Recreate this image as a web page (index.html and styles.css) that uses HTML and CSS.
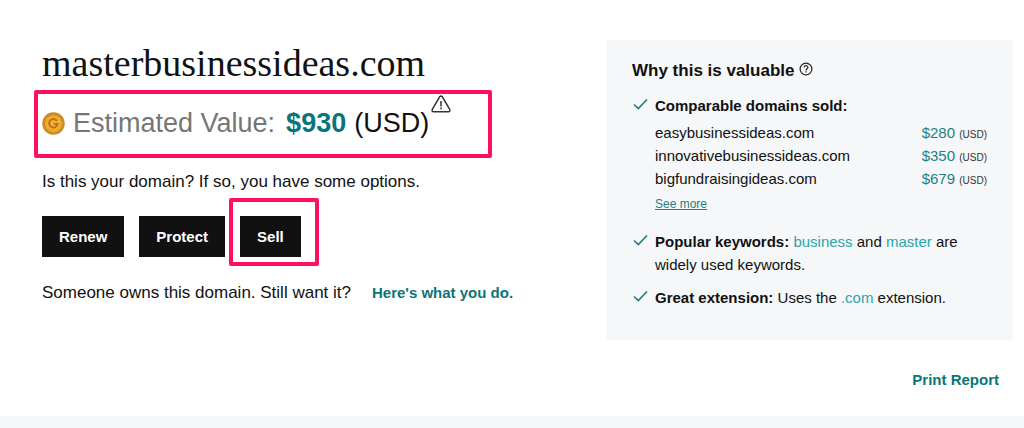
FILE: index.html
```html
<!DOCTYPE html>
<html lang="en">
<head>
<meta charset="utf-8">
<meta name="viewport" content="width=device-width, initial-scale=1">
<title>Domain appraisal</title>
<link rel="stylesheet" href="styles.css">
</head>
<body>
<main class="appraisal">
  <section class="summary">
    <h1 class="domain">masterbusinessideas.com</h1>
    <p class="estimate marked">
      <svg class="coin" viewBox="0 0 24 24" aria-hidden="true">
        <circle cx="12" cy="12" r="11.7" fill="#c8841f"/>
        <circle cx="12" cy="12" r="10.4" fill="none" stroke="#e3a32c" stroke-width="1" stroke-dasharray="1.5 1.2"/>
        <circle cx="12" cy="12" r="9" fill="#f3b12f"/>
        <circle cx="12" cy="12" r="7.3" fill="none" stroke="#e9a52a" stroke-width="1"/>
        <path d="M15.6 9.4A4.4 4.4 0 1 0 16.2 12.6H12.4" fill="none" stroke="#b8741a" stroke-width="2"/>
      </svg>
      <span class="label">Estimated Value:</span>
      <strong class="amount">$930</strong>
      <span>(USD)</span>
      <svg class="warning" viewBox="0 0 20 18" role="img" aria-label="Warning">
        <path d="M8.6 1.8 1.3 14.4Q.4 16.8 2.8 16.8H17.2Q19.6 16.8 18.7 14.4L11.4 1.8Q10 .2 8.6 1.8Z" fill="none" stroke="#333" stroke-width="1.5" stroke-linejoin="round"/>
        <path d="M10 6V11.4M10 12.6V14.2" stroke="#333" stroke-width="1.5"/>
      </svg>
    </p>
    <p class="question">Is this your domain? If so, you have some options.</p>
    <div class="actions">
      <button class="button" type="button">Renew</button>
      <button class="button" type="button">Protect</button>
      <span class="marked sell"><button class="button" type="button">Sell</button></span>
    </div>
    <p class="owned"><span>Someone owns this domain. Still want it?</span> <a class="link" href="#help">Here's what you do.</a></p>
  </section>

  <aside class="side">
    <section class="card">
      <h2 class="card-title">Why this is valuable
        <svg class="help" viewBox="0 0 14 14" role="img" aria-label="Help">
          <circle cx="7" cy="7" r="5.9" fill="none" stroke="#222" stroke-width="1.2"/>
          <path d="M5.1 5.6C5.1 3.1 8.9 3.1 8.9 5.4 8.9 6.8 7 6.8 7 8.4M7 9.3V10.6" fill="none" stroke="#222" stroke-width="1.2"/>
        </svg>
      </h2>
      <ul class="reasons">
        <li class="reason">
          <svg class="check" viewBox="0 0 15 12" aria-hidden="true"><path d="M1 6.5 5.3 10.5 14 1.5"/></svg>
          <div class="reason-body">
            <b>Comparable domains sold:</b>
            <table class="sales">
              <tr><td>easybusinessideas.com</td><td class="price">$280 <small>(USD)</small></td></tr>
              <tr><td>innovativebusinessideas.com</td><td class="price">$350 <small>(USD)</small></td></tr>
              <tr><td>bigfundraisingideas.com</td><td class="price">$679 <small>(USD)</small></td></tr>
            </table>
            <a class="more" href="#more">See more</a>
          </div>
        </li>
        <li class="reason">
          <svg class="check" viewBox="0 0 15 12" aria-hidden="true"><path d="M1 6.5 5.3 10.5 14 1.5"/></svg>
          <div class="reason-body"><b>Popular keywords:</b> <span class="key">business</span> and <span class="key">master</span> are <br>widely used keywords.</div>
        </li>
        <li class="reason">
          <svg class="check" viewBox="0 0 15 12" aria-hidden="true"><path d="M1 6.5 5.3 10.5 14 1.5"/></svg>
          <div class="reason-body"><b>Great extension:</b> Uses the <span class="key">.com</span> extension.</div>
        </li>
      </ul>
    </section>
    <a class="link print" href="#print">Print Report</a>
  </aside>
</main>
<footer class="footer"></footer>
</body>
</html>
```
FILE: styles.css
```css
* {
  box-sizing: border-box;
}

body {
  margin: 0;
  min-height: 100vh;
  display: flex;
  flex-direction: column;
  background: #fff;
  color: #111;
  font: 15px/23px "Liberation Sans", Arial, sans-serif;
}

h1, h2, p, ul {
  margin: 0;
  padding: 0;
}

.appraisal {
  display: grid;
  grid-template-columns: minmax(0, 553fr) minmax(0, 407fr);
  column-gap: 11px;
  padding: 40px 11px 25px 42px;
}

.domain {
  font: 400 38px/46px "Liberation Serif", "Times New Roman", serif;
}

.marked {
  position: relative;
}

/* Highlight frame drawn over the content */
.marked::after {
  content: "";
  position: absolute;
  border: 4px solid #ff0f5f;
  border-radius: 2px;
  pointer-events: none;
}

.estimate {
  display: flex;
  align-items: center;
  gap: 8px;
  width: fit-content;
  margin-top: 12px;
  padding-bottom: 2px;
  font-size: 27px;
  line-height: 50px;
}

.estimate.marked::after {
  inset: -8px -41px -8px -8px;
}

.coin {
  width: 23px;
  height: 23px;
}

.label {
  color: #767676;
}

.amount {
  margin-left: 3px;
  color: #09757a;
}

.warning {
  align-self: flex-start;
  width: 20px;
  height: 18px;
  margin-left: -6px;
  margin-top: -3px;
}

.question {
  margin-top: 20px;
  font-size: 17px;
}

.actions {
  display: flex;
  gap: 15px;
  margin-top: 23px;
}

.button {
  display: block;
  height: 41px;
  padding: 0 17px;
  border: 0;
  background: #111;
  color: #fff;
  font: 700 15px/23px "Liberation Sans", Arial, sans-serif;
}

.sell.marked::after {
  inset: -18px -18px -9px -11px;
}

.owned {
  display: flex;
  flex-wrap: wrap;
  align-items: baseline;
  column-gap: 21px;
  margin-top: 24px;
  font-size: 17px;
}

.link {
  color: #09757a;
  font-size: 15px;
  font-weight: 700;
  text-decoration: none;
}

.side {
  display: flex;
  flex-direction: column;
}

.card {
  padding: 19px 26px 31px;
  border-radius: 3px;
  background: #f5f7f8;
}

.card-title {
  font-size: 17px;
  line-height: 23px;
}

.help {
  width: 14px;
  height: 14px;
}

.reasons {
  display: grid;
  gap: 10px;
  margin-top: 12px;
  list-style: none;
}

.reason {
  display: flex;
  gap: 6px;
}

.check {
  flex: none;
  width: 17px;
  height: 12px;
  margin-top: 4px;
  fill: none;
  stroke: #1f8086;
  stroke-width: 1.7;
}

.reason-body {
  flex: 1;
}

.sales {
  width: 100%;
  margin-top: 4px;
  border-collapse: collapse;
}

.sales td {
  padding: 0;
}

.sales .price {
  color: #1f8086;
  text-align: right;
}

.price small {
  color: #333;
  font-size: 10px;
  line-height: 1;
}

.more {
  display: block;
  width: fit-content;
  margin: 3px 0 4px;
  color: #1f8086;
  font-size: 12px;
}

.key {
  color: #2ba5ad;
}

.print {
  align-self: flex-end;
  margin: 28px 14px 0 0;
}

.footer {
  flex: 1;
  min-height: 12px;
  background: #f5f7f8;
}
```
